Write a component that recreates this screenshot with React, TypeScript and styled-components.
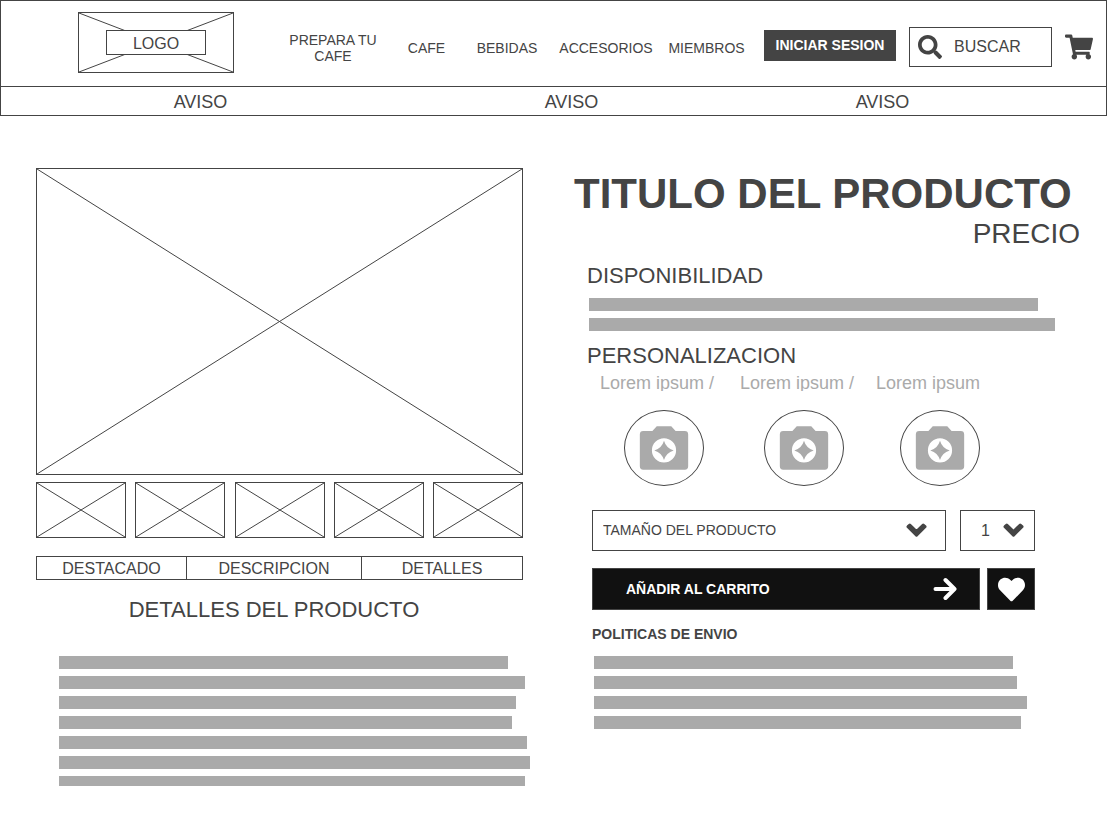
import React from "react";
import styled, { createGlobalStyle } from "styled-components";
import { FaHeart, FaSearch, FaShoppingCart } from "react-icons/fa";

const ink = "#444";
const muted = "#aaa";

const GlobalStyle = createGlobalStyle`
  *, *::before, *::after { box-sizing: border-box; }
  body {
    margin: 0;
    background: #fff;
    color: ${ink};
    font-family: "Liberation Sans", Arial, sans-serif;
    font-size: 14px;
    line-height: 16px;
  }
  h1, h2, h3, p, ul { margin: 0; padding: 0; font-weight: 400; }
  button, input, select { font: inherit; color: inherit; margin: 0; }
  svg { display: block; }
`;

const Header = styled.header`
  border: 1px solid ${ink};
`;

const TopBar = styled.div`
  display: flex;
  align-items: center;
  min-height: 85px;
  padding: 11px 13px 5px 77px;
`;

const Placeholder = styled.div<{ $height: number }>`
  position: relative;
  height: ${(p) => p.$height}px;
  border: 1px solid ${ink};
`;

const CrossSvg = styled.svg`
  position: absolute;
  inset: 0;
  width: 100%;
  height: 100%;
  stroke: ${ink};
`;

const LogoLink = styled.a`
  flex: none;
  align-self: flex-start;
  width: 156px;
  color: inherit;
  text-decoration: none;
`;

const LogoFrame = styled(Placeholder)`
  display: flex;
  align-items: center;
  justify-content: center;
`;

const LogoText = styled.span`
  position: relative;
  width: 100px;
  height: 25px;
  border: 1px solid ${ink};
  background: #fff;
  font-size: 16px;
  line-height: 25px;
  text-align: center;
`;

const Nav = styled.nav`
  flex: 1;
  display: grid;
  grid-template-columns: 124fr 63fr 98fr 100fr 101fr;
  align-items: center;
  margin: 3px 7px 0 37px;
`;

const NavLink = styled.a<{ $wrap?: boolean }>`
  padding: ${(p) => (p.$wrap ? "0 16px" : "0")};
  color: inherit;
  text-align: center;
  text-decoration: none;
  white-space: ${(p) => (p.$wrap ? "normal" : "nowrap")};
`;

const Actions = styled.div`
  flex: none;
  display: flex;
  align-items: center;
  gap: 13px;
`;

const LoginButton = styled.button`
  width: 132px;
  height: 31px;
  margin-bottom: 3px;
  padding: 0;
  border: 0;
  background: ${ink};
  color: #fff;
  font-weight: 700;
  white-space: nowrap;
`;

const SearchBox = styled.label`
  display: flex;
  align-items: center;
  gap: 12px;
  width: 143px;
  height: 40px;
  padding: 0 8px;
  border: 1px solid ${ink};
`;

const SearchInput = styled.input`
  flex: 1;
  min-width: 0;
  padding: 0;
  border: 0;
  outline: 0;
  background: none;
  font-size: 16px;
  &::placeholder { color: ${ink}; opacity: 1; }
`;

const IconButton = styled.button`
  padding: 0;
  border: 0;
  background: none;
`;

const Notices = styled.div`
  display: grid;
  grid-template-columns: 399fr 343fr 279fr 84fr;
  border-top: 1px solid ${ink};
`;

const Notice = styled.p`
  padding-top: 2px;
  font-size: 18px;
  line-height: 26px;
  text-align: center;
`;

const Main = styled.main`
  display: grid;
  grid-template-columns: 487fr 506fr;
  gap: 51px;
  align-items: start;
  padding: 52px 27px 40px 36px;
`;

const Thumbs = styled.div`
  display: flex;
  justify-content: space-between;
  margin-top: 7px;
`;

const Thumb = styled(Placeholder).attrs({ as: "button", type: "button" })`
  flex: 0 1 90px;
  padding: 0;
  background: none;
`;

const Tabs = styled.div`
  display: grid;
  grid-template-columns: 149fr 175fr 161fr;
  margin-top: 18px;
  border: 1px solid ${ink};
`;

const Tab = styled.button`
  height: 22px;
  padding: 2px 0 0;
  border: 0;
  background: none;
  font-size: 16px;
  line-height: 20px;
  & + & { border-left: 1px solid ${ink}; }
`;

const Heading = styled.h2`
  font-size: 22px;
  line-height: 28px;
`;

const DetailsHeading = styled(Heading)`
  margin-top: 16px;
  padding-right: 11px;
  text-align: center;
`;

const Lines = styled.div`
  display: flex;
  flex-direction: column;
  gap: 7px;
`;

const DetailLines = styled(Lines)`
  margin: 32px -7px 0 23px;
`;

const StockLines = styled(Lines)`
  margin: 8px 25px 0 15px;
`;

const PolicyLines = styled(Lines)`
  margin: 13px 53px 0 20px;
`;

const Line = styled.div<{ $share: number; $short?: boolean }>`
  width: ${(p) => p.$share * 100}%;
  height: ${(p) => (p.$short ? 10 : 13)}px;
  background: ${muted};
`;

const Title = styled.h1`
  font-size: 42px;
  font-weight: 700;
  line-height: 52px;
  white-space: nowrap;
`;

const Price = styled.p`
  font-size: 28px;
  line-height: 28px;
  text-align: right;
`;

const StockHeading = styled(Heading)`
  margin: 14px 0 0 13px;
`;

const CustomHeading = styled(Heading)`
  margin: 11px 0 0 13px;
`;

const Options = styled.div`
  display: grid;
  grid-template-columns: 140px 136px 1fr;
  margin: 3px 0 0 26px;
`;

const Option = styled.div`
  display: flex;
  flex-direction: column;
  gap: 19px;
`;

const OptionLabel = styled.span<{ $clip: boolean }>`
  height: 18px;
  overflow: ${(p) => (p.$clip ? "hidden" : "visible")};
  color: ${muted};
  font-size: 18px;
  line-height: 20px;
  white-space: nowrap;
`;

const OptionButton = styled.button`
  display: flex;
  align-items: center;
  justify-content: center;
  width: 80px;
  height: 76px;
  margin-left: 24px;
  padding: 0;
  border: 1px solid ${ink};
  border-radius: 50%;
  background: none;
`;

const Purchase = styled.div`
  margin: 24px 45px 0 18px;
`;

const SelectRow = styled.div`
  display: grid;
  grid-template-columns: 1fr 75px;
  gap: 14px;
`;

const SelectBox = styled.div`
  position: relative;
`;

const Select = styled.select<{ $large?: boolean }>`
  appearance: none;
  display: block;
  width: 100%;
  height: 41px;
  padding: ${(p) => (p.$large ? "0 0 0 20px" : "0 0 2px 10px")};
  border: 1px solid ${ink};
  border-radius: 0;
  background: #fff;
  font-size: ${(p) => (p.$large ? 16 : 14)}px;
`;

const SelectIcon = styled.svg<{ $right: number }>`
  position: absolute;
  top: 10px;
  right: ${(p) => p.$right}px;
  width: 22px;
  height: 20px;
  pointer-events: none;
`;

const BuyRow = styled.div`
  display: grid;
  grid-template-columns: 1fr 48px;
  gap: 7px;
  margin-top: 17px;
`;

const DarkButton = styled.button`
  display: flex;
  align-items: center;
  justify-content: center;
  height: 42px;
  padding: 0;
  border: 1px solid ${ink};
  background: #111;
  color: #fff;
  font-weight: 700;
`;

const CartButton = styled(DarkButton)`
  justify-content: space-between;
  padding: 0 22px 0 33px;
`;

const PolicyHeading = styled.h3`
  margin: 15px 0 0 18px;
  font-size: 14px;
  font-weight: 700;
  line-height: 18px;
`;

const Cross = () => (
  <CrossSvg viewBox="0 0 100 100" preserveAspectRatio="none" aria-hidden="true">
    <path d="M0 0L100 100M100 0L0 100" vectorEffect="non-scaling-stroke" fill="none" />
  </CrossSvg>
);

const ChevronIcon = ({ right }: { right: number }) => (
  <SelectIcon
    $right={right}
    viewBox="0 0 22 20"
    fill={ink}
    stroke={ink}
    strokeWidth="3"
    strokeLinejoin="round"
    aria-hidden="true"
  >
    <path d="M2 6.700L3.800 5L10.500 11.500L17.200 5L19 6.700L10.500 15.200Z" />
  </SelectIcon>
);

const CameraIcon = () => (
  <svg width="58" height="58" viewBox="0 0 24 24" fill={muted} aria-hidden="true">
    <path
      fillRule="evenodd"
      d="M9 3L7.2 5H3.4A1.4 1.4 0 0 0 2 6.400V19.600A1.400 1.400 0 0 0 3.400 21H20.600A1.400 1.400 0 0 0 22 19.600V6.400A1.400 1.400 0 0 0 20.600 5H16.800L15 3ZM12 8A5 5 0 1 1 12 18A5 5 0 1 1 12 8Z"
    />
    <path d="M12 9Q12.900 12.100 16 13Q12.900 13.900 12 17Q11.100 13.900 8 13Q11.100 12.100 12 9Z" />
  </svg>
);

const ArrowIcon = () => (
  <svg
    width="24"
    height="24"
    viewBox="0 0 24 24"
    fill="none"
    stroke="currentColor"
    strokeWidth="4"
    strokeLinecap="round"
    strokeLinejoin="round"
    aria-hidden="true"
  >
    <path d="M2.500 12H21M12.500 3L21.500 12L12.500 21" />
  </svg>
);

const options = ["Lorem ipsum /", "Lorem ipsum /", "Lorem ipsum"];
const detailLines = [449, 466, 457, 453, 468, 471, 466];
const stockLines = [449, 466];
const policyLines = [419, 423, 433, 427];

const share = (values: number[], i: number) => values[i] / Math.max(...values);

export default function App() {
  return (
    <>
      <GlobalStyle />
      <Header>
        <TopBar>
          <LogoLink href="#">
            <LogoFrame $height={61}>
              <Cross />
              <LogoText>LOGO</LogoText>
            </LogoFrame>
          </LogoLink>
          <Nav>
            <NavLink href="#" $wrap>PREPARA TU CAFE</NavLink>
            <NavLink href="#">CAFE</NavLink>
            <NavLink href="#">BEBIDAS</NavLink>
            <NavLink href="#">ACCESORIOS</NavLink>
            <NavLink href="#">MIEMBROS</NavLink>
          </Nav>
          <Actions>
            <LoginButton type="button">INICIAR SESION</LoginButton>
            <SearchBox>
              <FaSearch size={24} aria-hidden="true" />
              <SearchInput type="text" placeholder="BUSCAR" aria-label="Buscar" />
            </SearchBox>
            <IconButton type="button" aria-label="Carrito">
              <FaShoppingCart size={28} />
            </IconButton>
          </Actions>
        </TopBar>
        <Notices>
          <Notice>AVISO</Notice>
          <Notice>AVISO</Notice>
          <Notice>AVISO</Notice>
        </Notices>
      </Header>
      <Main>
        <section>
          <Placeholder $height={307}>
            <Cross />
          </Placeholder>
          <Thumbs>
            {[1, 2, 3, 4, 5].map((n) => (
              <Thumb key={n} $height={56} aria-label={`Imagen ${n}`}>
                <Cross />
              </Thumb>
            ))}
          </Thumbs>
          <Tabs role="tablist">
            <Tab type="button" role="tab">DESTACADO</Tab>
            <Tab type="button" role="tab">DESCRIPCION</Tab>
            <Tab type="button" role="tab" aria-selected="true">DETALLES</Tab>
          </Tabs>
          <DetailsHeading>DETALLES DEL PRODUCTO</DetailsHeading>
          <DetailLines>
            {detailLines.map((_, i) => (
              <Line key={i} $share={share(detailLines, i)} $short={i === detailLines.length - 1} />
            ))}
          </DetailLines>
        </section>
        <section>
          <Title>TITULO DEL PRODUCTO</Title>
          <Price>PRECIO</Price>
          <StockHeading>DISPONIBILIDAD</StockHeading>
          <StockLines>
            {stockLines.map((_, i) => (
              <Line key={i} $share={share(stockLines, i)} />
            ))}
          </StockLines>
          <CustomHeading>PERSONALIZACION</CustomHeading>
          <Options>
            {options.map((label, i) => (
              <Option key={i}>
                <OptionLabel id={`option-${i}`} $clip={label.endsWith("/")}>{label}</OptionLabel>
                <OptionButton type="button" aria-labelledby={`option-${i}`}>
                  <CameraIcon />
                </OptionButton>
              </Option>
            ))}
          </Options>
          <Purchase>
            <SelectRow>
              <SelectBox>
                <Select aria-label="Tamaño del producto">
                  <option>TAMAÑO DEL PRODUCTO</option>
                </Select>
                <ChevronIcon right={18} />
              </SelectBox>
              <SelectBox>
                <Select $large aria-label="Cantidad">
                  <option>1</option>
                  <option>2</option>
                  <option>3</option>
                </Select>
                <ChevronIcon right={10} />
              </SelectBox>
            </SelectRow>
            <BuyRow>
              <CartButton type="button">
                AÑADIR AL CARRITO
                <ArrowIcon />
              </CartButton>
              <DarkButton type="button" aria-label="Favorito">
                <FaHeart size={27} />
              </DarkButton>
            </BuyRow>
          </Purchase>
          <PolicyHeading>POLITICAS DE ENVIO</PolicyHeading>
          <PolicyLines>
            {policyLines.map((_, i) => (
              <Line key={i} $share={share(policyLines, i)} />
            ))}
          </PolicyLines>
        </section>
      </Main>
    </>
  );
}
